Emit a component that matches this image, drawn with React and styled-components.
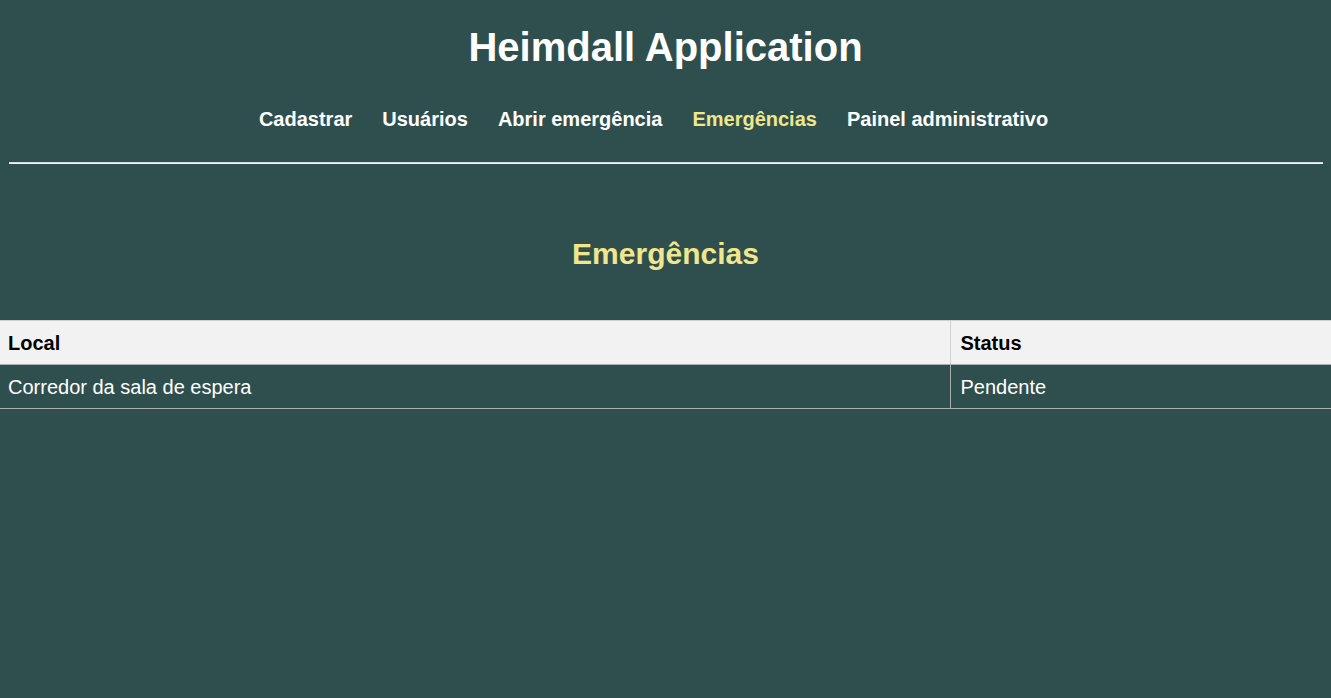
import React from "react";
import styled, { createGlobalStyle } from "styled-components";

const GlobalStyle = createGlobalStyle`
  html, body {
    margin: 0;
    padding: 0;
    background: #2f4f4f;
    font-family: "Liberation Sans", Arial, sans-serif;
  }
  body { min-height: 698px; }
`;

const Page = styled.div`
  min-height: 698px;
  background: #2f4f4f;
  color: #ffffff;
  display: flex;
  flex-direction: column;
`;

const Header = styled.header`
  display: flex;
  flex-direction: column;
  align-items: center;
  padding: 24px 8px 0;
`;

const Title = styled.h1`
  margin: 0;
  font-size: 40px;
  line-height: 46px;
  font-weight: 700;
  color: #ffffff;
  text-align: center;
`;

const Nav = styled.nav`
  display: flex;
  justify-content: center;
  gap: 30px;
  margin-top: 38px;
  padding-right: 24px;
`;

const NavLink = styled.a`
  font-size: 20px;
  line-height: 23px;
  font-weight: 700;
  text-decoration: none;
  color: ${(p) => (p.$active ? "#f0e68c" : "#ffffff")};
  cursor: pointer;
`;

const Divider = styled.hr`
  margin: 31px 8px 0 9px;
  border: none;
  border-top: 1px solid #d8dcdc;
  border-bottom: 1px solid #f4f4f4;
  height: 0;
`;

const Main = styled.main`
  display: flex;
  flex-direction: column;
`;

const SectionTitle = styled.h2`
  margin: 72px 0 49px;
  font-size: 30px;
  line-height: 35px;
  font-weight: 700;
  color: #f0e68c;
  text-align: center;
`;

const Table = styled.table`
  width: 100%;
  border-collapse: collapse;
  table-layout: fixed;
  font-size: 20px;
  line-height: 23px;
`;

const HeadCell = styled.th`
  background: #f2f2f2;
  color: #000000;
  font-weight: 700;
  text-align: left;
  padding: 11px 8px 9px ${(p) => (p.$first ? "8px" : "10px")};
  border-top: 1px solid #d0d0d0;
  border-bottom: 1px solid #a9b0b0;
  border-left: ${(p) => (p.$first ? "none" : "1px solid #d0d0d0")};
`;

const Cell = styled.td`
  color: #ffffff;
  text-align: left;
  padding: 11px 8px 9px ${(p) => (p.$first ? "8px" : "10px")};
  border-bottom: 1px solid #a9b0b0;
  border-left: ${(p) => (p.$first ? "none" : "1px solid #a9b0b0")};
`;

const navItems = [
  "Cadastrar",
  "Usuários",
  "Abrir emergência",
  "Emergências",
  "Painel administrativo",
];

const rows = [{ local: "Corredor da sala de espera", status: "Pendente" }];

export default function App() {
  return (
    <>
      <GlobalStyle />
      <Page>
        <Header>
          <Title>Heimdall Application</Title>
          <Nav>
            {navItems.map((item) => (
              <NavLink key={item} $active={item === "Emergências"}>
                {item}
              </NavLink>
            ))}
          </Nav>
        </Header>
        <Divider />
        <Main>
          <SectionTitle>Emergências</SectionTitle>
          <Table>
            <colgroup>
              <col style={{ width: "950px" }} />
              <col />
            </colgroup>
            <thead>
              <tr>
                <HeadCell $first>Local</HeadCell>
                <HeadCell>Status</HeadCell>
              </tr>
            </thead>
            <tbody>
              {rows.map((r) => (
                <tr key={r.local}>
                  <Cell $first>{r.local}</Cell>
                  <Cell>{r.status}</Cell>
                </tr>
              ))}
            </tbody>
          </Table>
        </Main>
      </Page>
    </>
  );
}
